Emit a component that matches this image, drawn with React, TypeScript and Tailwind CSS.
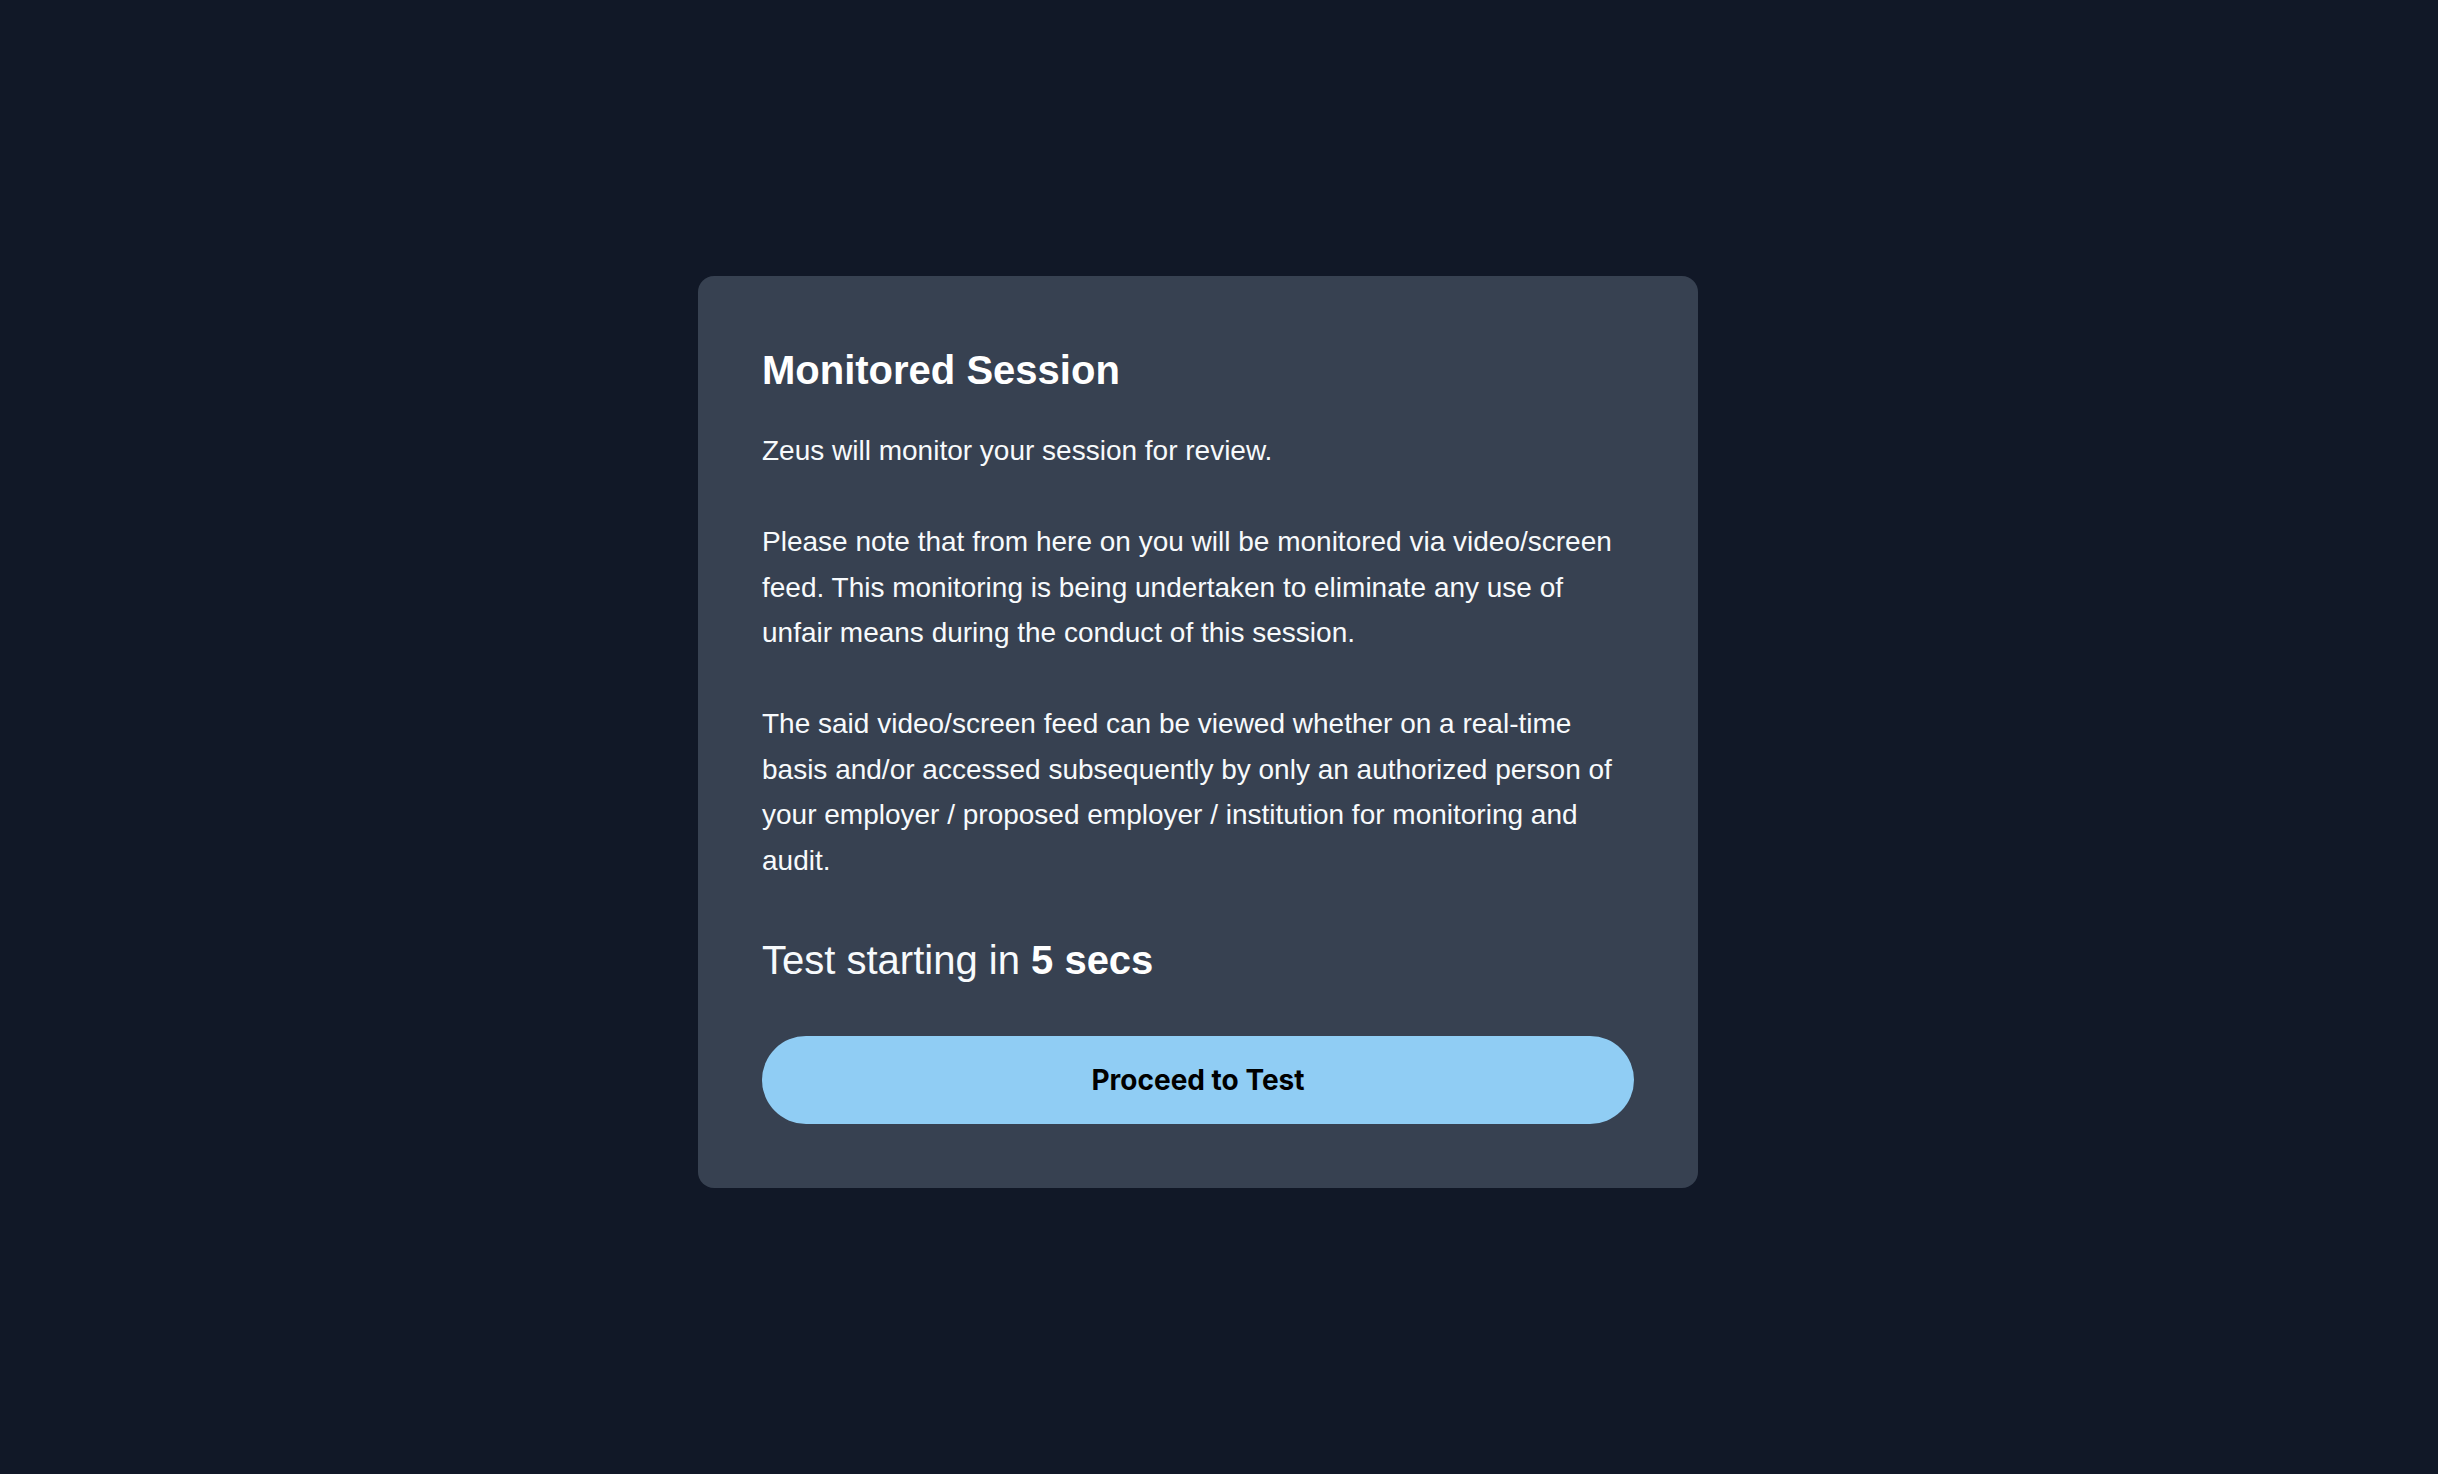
import React from 'react';

const paragraphs = [
  'Zeus will monitor your session for review.',
  'Please note that from here on you will be monitored via video/screen feed. This monitoring is being undertaken to eliminate any use of unfair means during the conduct of this session.',
  'The said video/screen feed can be viewed whether on a real-time basis and/or accessed subsequently by only an authorized person of your employer / proposed employer / institution for monitoring and audit.',
];

export default function App() {
  const seconds = 5;

  return (
    <div className="h-screen w-full bg-[#111827] flex items-center justify-center pr-[42px] pb-[10px] font-['Liberation_Sans',Arial,sans-serif]">
      <div className="w-[1000px] bg-[#374151] rounded-2xl p-16 text-[#f7fafc]">
        {/* Header */}
        <h2 className="text-[40px] leading-[60px] font-bold text-white">Monitored Session</h2>

        {/* Notice */}
        <div className="mt-[28px] flex flex-col gap-[45.5px]">
          {paragraphs.map((p, i) => (
            <p key={i} className="text-[28px] leading-[45.5px]">
              {p}
            </p>
          ))}
        </div>

        {/* Countdown */}
        <p className="mt-[47px] text-[40px] leading-[60px]">
          Test starting in <span className="font-bold text-white">{seconds} secs</span>
        </p>

        <button className="mt-[45.5px] w-full h-[88px] rounded-full bg-[#90cdf4] text-black text-[28px] font-bold font-['Inter',sans-serif] flex items-center justify-center">
          Proceed to Test
        </button>
      </div>
    </div>
  );
}
